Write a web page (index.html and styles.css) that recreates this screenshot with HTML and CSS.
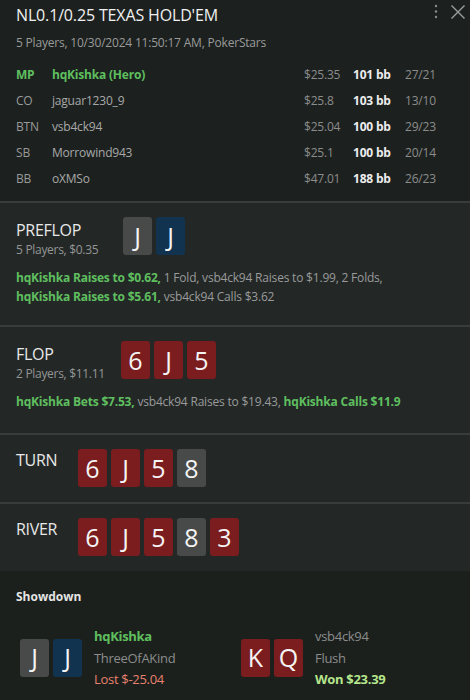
FILE: index.html
```html
<!DOCTYPE html>
<html>
<head>
<meta charset="utf-8">
<link rel="stylesheet" href="styles.css">
</head>
<body>
<div class="panel">
  <header class="head">
    <div class="head-top">
      <div class="title">NL0.1/0.25 TEXAS HOLD'EM</div>
      <div class="tools">
        <svg class="dots" width="6" height="18" viewBox="0 0 6 18"><circle cx="3" cy="4" r="1.2"/><circle cx="3" cy="9.5" r="1.2"/><circle cx="3" cy="15" r="1.2"/></svg>
        <svg class="close" width="16" height="16" viewBox="0 0 16 16"><path d="M1.5 1.5 L14.5 14.5 M14.5 1.5 L1.5 14.5"/></svg>
      </div>
    </div>
    <div class="sub">5 Players, 10/30/2024 11:50:17 AM, PokerStars</div>
    <div class="players">
      <div class="row hero"><span class="pos">MP</span><span class="name">hqKishka (Hero)</span><span class="stack">$25.35</span><span class="bb">101 bb</span><span class="stat">27/21</span></div>
      <div class="row"><span class="pos">CO</span><span class="name">jaguar1230_9</span><span class="stack">$25.8</span><span class="bb">103 bb</span><span class="stat">13/10</span></div>
      <div class="row"><span class="pos">BTN</span><span class="name">vsb4ck94</span><span class="stack">$25.04</span><span class="bb">100 bb</span><span class="stat">29/23</span></div>
      <div class="row"><span class="pos">SB</span><span class="name">Morrowind943</span><span class="stack">$25.1</span><span class="bb">100 bb</span><span class="stat">20/14</span></div>
      <div class="row"><span class="pos">BB</span><span class="name">oXMSo</span><span class="stack">$47.01</span><span class="bb">188 bb</span><span class="stat">26/23</span></div>
    </div>
  </header>

  <section class="street preflop">
    <div class="street-top">
      <div class="label"><div class="street-name">PREFLOP</div><div class="street-sub">5 Players, $0.35</div></div>
      <div class="cards"><span class="card gray">J</span><span class="card blue">J</span></div>
    </div>
    <div class="actions"><span class="hl">hqKishka Raises to $0.62,</span> 1 Fold, vsb4ck94 Raises to $1.99, 2 Folds,<br><span class="hl">hqKishka Raises to $5.61,</span> vsb4ck94 Calls $3.62</div>
  </section>

  <section class="street flop">
    <div class="street-top">
      <div class="label"><div class="street-name">FLOP</div><div class="street-sub">2 Players, $11.11</div></div>
      <div class="cards"><span class="card red">6</span><span class="card red">J</span><span class="card red">5</span></div>
    </div>
    <div class="actions"><span class="hl">hqKishka Bets $7.53,</span> vsb4ck94 Raises to $19.43, <span class="hl">hqKishka Calls $11.9</span></div>
  </section>

  <section class="street short">
    <div class="street-top">
      <div class="label"><div class="street-name">TURN</div></div>
      <div class="cards"><span class="card red">6</span><span class="card red">J</span><span class="card red">5</span><span class="card gray">8</span></div>
    </div>
  </section>

  <section class="street short">
    <div class="street-top">
      <div class="label"><div class="street-name">RIVER</div></div>
      <div class="cards"><span class="card red">6</span><span class="card red">J</span><span class="card red">5</span><span class="card gray">8</span><span class="card red">3</span></div>
    </div>
  </section>

  <section class="showdown">
    <div class="sd-title">Showdown</div>
    <div class="sd-players">
      <div class="sd-player">
        <div class="cards"><span class="card gray">J</span><span class="card blue">J</span></div>
        <div class="sd-info"><div class="sd-name hero-name">hqKishka</div><div class="sd-hand">ThreeOfAKind</div><div class="sd-res lost">Lost $-25.04</div></div>
      </div>
      <div class="sd-player">
        <div class="cards"><span class="card red">K</span><span class="card red">Q</span></div>
        <div class="sd-info"><div class="sd-name">vsb4ck94</div><div class="sd-hand">Flush</div><div class="sd-res won">Won $23.39</div></div>
      </div>
    </div>
  </section>
</div>
</body>
</html>
```
FILE: styles.css
```css
html, body {
  margin: 0;
  padding: 0;
  background: #1c211f;
}
body {
  font-family: "Open Sans", "Noto Sans", sans-serif;
  color: #a3a3a3;
  width: 470px;
  height: 700px;
  overflow: hidden;
}
.panel {
  display: flex;
  flex-direction: column;
  height: 700px;
  overflow: hidden;
}
.head {
  background: #1c211f;
  padding: 4px 16px 10px 16px;
}
.head-top {
  display: flex;
  justify-content: space-between;
  align-items: flex-start;
}
.title {
  font-size: 16px;
  line-height: 22px;
  color: #f0f0f0;
  letter-spacing: -0.15px;
}
.tools {
  display: flex;
  gap: 11px;
  margin-right: -12px;
  margin-top: -2px;
}
.dots { fill: #8a8d8c; }
.close { stroke: #9a9d9c; stroke-width: 1.4; fill: none; margin-top: 2px; }
.sub {
  font-size: 12px;
  line-height: 16px;
  margin-top: 9px;
  color: #9a9a9a;
  letter-spacing: -0.2px;
}
.players {
  margin-top: 10px;
  display: flex;
  flex-direction: column;
}
.row {
  display: grid;
  grid-template-columns: 36px 252px 49px 52px auto;
  height: 26px;
  align-items: center;
  font-size: 12px;
  letter-spacing: -0.2px;
}
.pos { color: #999; }
.name { color: #a8a8a8; }
.stack { color: #8c8c8c; }
.bb { color: #ececec; font-weight: 700; }
.stat { color: #8c8c8c; }
.hero .pos, .hero .name { color: #5fbf5f; font-weight: 700; }

.street {
  background: #232827;
  border-top: 2px solid #383d3b;
  padding: 14px 16px 15px 16px;
}
.preflop { padding-bottom: 19px; }
.flop { padding-bottom: 22px; }
.street-top {
  display: flex;
  align-items: flex-start;
  gap: 20px;
}
.label { padding-top: 3px; }
.preflop .label { width: 87px; }
.flop .label { width: 85px; }
.short .label { padding-top: 1px; width: 42px; }
.street-name {
  font-size: 16px;
  line-height: 20px;
  color: #e8e8e8;
  letter-spacing: -0.3px;
  white-space: nowrap;
}
.street-sub {
  font-size: 12px;
  line-height: 16px;
  color: #959595;
  margin-top: 2px;
  letter-spacing: -0.3px;
  white-space: nowrap;
}
.cards {
  display: flex;
  gap: 4px;
}
.card {
  width: 29px;
  height: 38px;
  border-radius: 3px;
  display: flex;
  align-items: center;
  justify-content: center;
  font-size: 25px;
  color: #f4f4f4;
  line-height: 1;
}
.gray { background: #484a4a; }
.blue { background: #12334f; }
.red { background: #7b1d1e; }
.actions {
  margin-top: 10px;
  font-size: 12px;
  line-height: 19px;
  color: #9a9a9a;
  letter-spacing: -0.2px;
}
.hl { color: #5fbf5f; font-weight: 700; }

.showdown {
  background: #1b201d;
  padding: 18px 16px 10px 16px;
  flex: 1;
  min-height: 0;
}
.sd-title {
  font-size: 12px;
  font-weight: 700;
  color: #e4e4e4;
  line-height: 16px;
}
.sd-players {
  display: grid;
  grid-template-columns: 221px 221px;
  padding-left: 4px;
  margin-top: 20px;
}
.sd-player {
  display: flex;
  align-items: center;
  gap: 12px;
}
.sd-info {
  display: flex;
  flex-direction: column;
  font-size: 13px;
  line-height: 21.5px;
  letter-spacing: -0.3px;
  padding-top: 1px;
}
.sd-name { color: #8c8c8c; }
.hero-name { color: #5fbf5f; font-weight: 700; }
.sd-hand { color: #8c8c8c; }
.lost { color: #e8806e; }
.won { color: #b6e68c; font-weight: 700; }
```
